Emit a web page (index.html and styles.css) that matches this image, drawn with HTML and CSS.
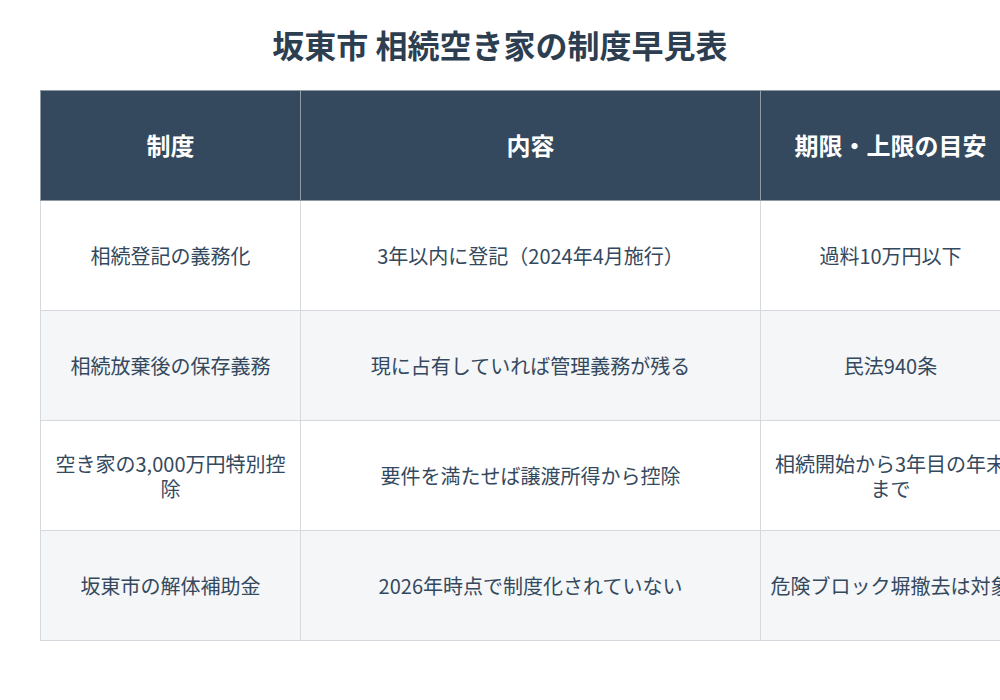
FILE: index.html
```html
<!DOCTYPE html>
<html lang="ja">
<head>
<meta charset="utf-8">
<title>坂東市 相続空き家の制度早見表</title>
<link rel="stylesheet" href="styles.css">
</head>
<body>
<main class="page">
  <h1 class="title">坂東市 相続空き家の制度早見表</h1>
  <table class="summary">
    <colgroup>
      <col class="c1"><col class="c2"><col class="c3">
    </colgroup>
    <thead>
      <tr>
        <th>制度</th>
        <th>内容</th>
        <th>期限・上限の目安</th>
      </tr>
    </thead>
    <tbody>
      <tr>
        <td>相続登記の義務化</td>
        <td>3年以内に登記（2024年4月施行）</td>
        <td>過料10万円以下</td>
      </tr>
      <tr>
        <td>相続放棄後の保存義務</td>
        <td>現に占有していれば管理義務が残る</td>
        <td>民法940条</td>
      </tr>
      <tr>
        <td>空き家の3,000万円特別控除</td>
        <td>要件を満たせば譲渡所得から控除</td>
        <td>相続開始から3年目の年末まで</td>
      </tr>
      <tr>
        <td>坂東市の解体補助金</td>
        <td>2026年時点で制度化されていない</td>
        <td>危険ブロック塀撤去は対象</td>
      </tr>
    </tbody>
  </table>
</main>
</body>
</html>
```

FILE: styles.css
```css
html, body {
  margin: 0;
  padding: 0;
  background: #ffffff;
}

body {
  font-family: "Noto Sans CJK JP", "Noto Sans", sans-serif;
  color: #34495e;
}

.page {
  padding: 25px 40px 0;
}

.title {
  margin: 0 0 27px;
  font-size: 32px;
  line-height: 38px;
  font-weight: 700;
  color: #2c3e50;
  text-align: center;
}

.summary {
  border-collapse: collapse;
  table-layout: fixed;
  width: 980px;
}

.c1 { width: 260px; }
.c2 { width: 460px; }
.c3 { width: 260px; }

.summary th,
.summary td {
  height: 110px;
  padding: 0 8px;
  text-align: center;
  vertical-align: middle;
  box-sizing: border-box;
}

.summary th {
  background: #34495e;
  color: #ffffff;
  font-size: 24px;
  font-weight: 700;
  line-height: 1.2;
  border: 1px solid #8e9aa6;
}

.summary td {
  font-size: 20px;
  line-height: 1.25;
  color: #34495e;
  border: 1px solid #d5d8dc;
}

.summary tbody tr:nth-child(even) td {
  background: #f4f6f8;
}
```
